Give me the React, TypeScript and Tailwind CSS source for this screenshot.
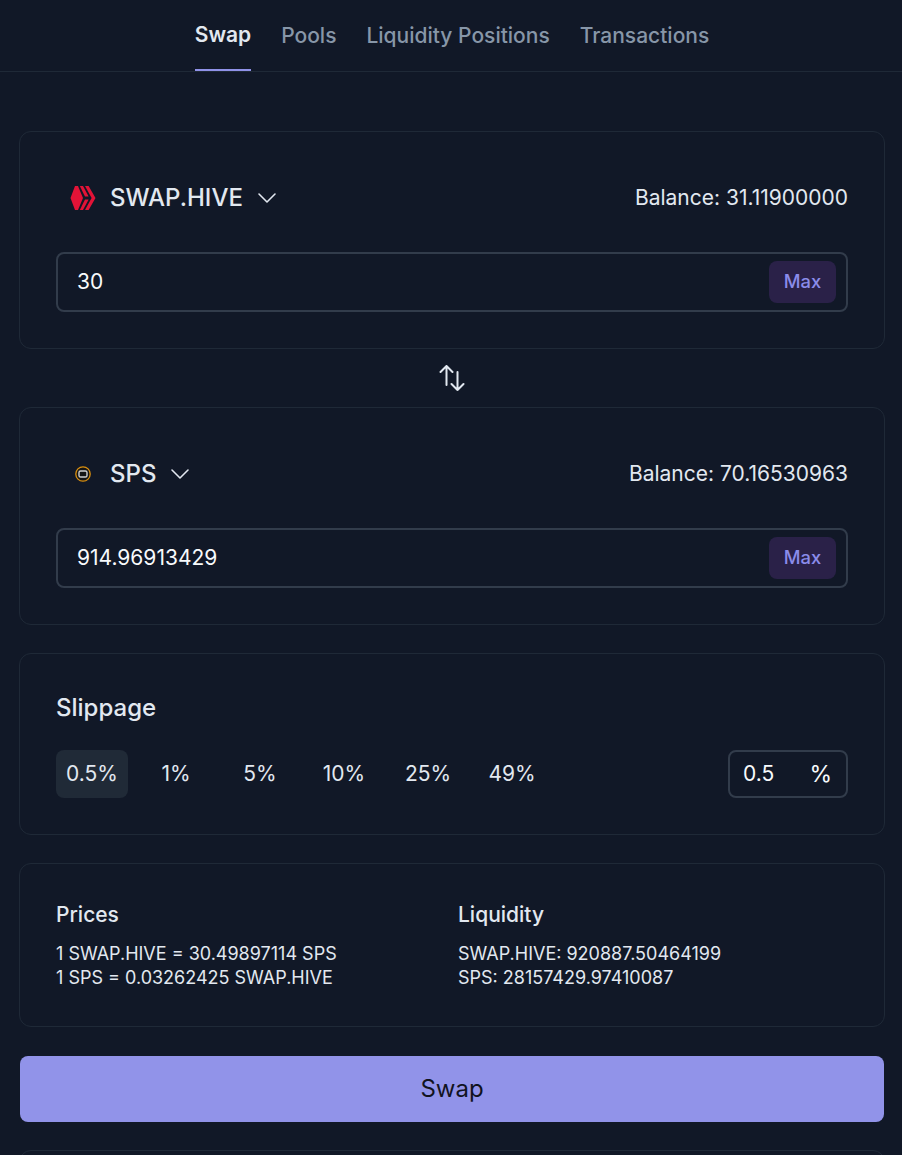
import React from "react";
import { ChevronDown } from "lucide-react";

function Hive() {
  return (
    <svg width="26" height="26" viewBox="0 0 26 26" fill="#e31337">
      <path d="M5 1 L8 1 L13 13 L8 25 L5 25 L0.5 13Z" />
      <path d="M9.8 1 L13 1 L18.6 11.6 L15 11.6Z" />
      <path d="M15 14.4 L18.6 14.4 L13 25 L9.8 25Z" />
      <path d="M15 1 L18.6 1 L25.5 13 L18.6 25 L15 25 L21.6 13Z" />
    </svg>
  );
}

function Sps() {
  return (
    <svg width="16" height="16" viewBox="0 0 16 16" fill="none">
      <circle cx="8" cy="8" r="7.2" stroke="#d98f10" strokeWidth="1.3" fill="#151515" />
      <rect x="4" y="5" width="8" height="6" rx="1.6" stroke="#d0d0d0" strokeWidth="1.4" />
    </svg>
  );
}

function SwapArrows() {
  return (
    <svg width="26" height="26" viewBox="0 0 26 26" fill="none" stroke="#e2e8f0" strokeWidth="2" strokeLinecap="round" strokeLinejoin="round">
      <path d="M7.5 20V1 M1.5 7 L7.5 1 L13.5 7" />
      <path d="M18.5 7V25 M12.5 19 L18.5 25 L24.5 19" />
    </svg>
  );
}

function TokenCard({ icon, name, balance, value }: { icon: React.ReactNode; name: string; balance: string; value: string }) {
  return (
    <div className="rounded-xl border border-[#1f2937] px-9 pt-[36px] pb-[36px] h-[218px]">
      <div className="flex items-center justify-between h-[60px]">
        <div className="flex items-center">
          <div className="w-[54px] flex justify-center">{icon}</div>
          <span className="text-[24px] font-medium text-[#e2e8f0]">{name}</span>
          <ChevronDown className="ml-[8px] w-8 h-8 text-[#e2e8f0]" strokeWidth={1.2} />
        </div>
        <span className="text-[21px] text-[#e2e8f0]">Balance: {balance}</span>
      </div>
      <div className="mt-[24px] h-[60px] rounded-lg border-2 border-[#323c4b] flex items-center justify-between pl-[19px] pr-[10px]">
        <span className="text-[21px] text-[#f8fafc]">{value}</span>
        <button className="h-[42px] w-[67px] rounded-lg bg-[#2a2148] text-[#8a8cea] text-[18.4px] font-medium">Max</button>
      </div>
    </div>
  );
}

export default function App() {
  return (
    <div className="w-[902px] h-[1155px] overflow-hidden bg-[#111827]" style={{ fontFamily: "Inter, sans-serif" }}>
      <div className="h-[72px] border-b border-[#1f2937] flex justify-center gap-[30px] pl-[2px]">
        <div className="h-[71px] flex items-center pt-[1px] text-[21px] font-semibold text-[#e2e8f0] border-b-[2px] border-[#9092e8]">Swap</div>
        <div className="h-[71px] flex items-center text-[21px] font-medium text-[#8796a8]">Pools</div>
        <div className="h-[71px] flex items-center text-[21px] font-medium text-[#8796a8]">Liquidity Positions</div>
        <div className="h-[71px] flex items-center text-[21px] font-medium text-[#8796a8]">Transactions</div>
      </div>
      <div className="pl-[19px] pr-[17px] pt-[59px]">
        <TokenCard icon={<Hive />} name="SWAP.HIVE" balance="31.11900000" value="30" />
        <div className="h-[58px] flex items-center justify-center">
          <SwapArrows />
        </div>
        <TokenCard icon={<Sps />} name="SPS" balance="70.16530963" value="914.96913429" />
        <div className="mt-[28px] rounded-xl border border-[#1f2937] px-9 pt-[37px] h-[182px]">
          <div className="text-[24px] font-medium text-[#e2e8f0] leading-[34px]">Slippage</div>
          <div className="mt-[25px] flex items-center justify-between">
            <div className="flex gap-3">
              {["0.5%", "1%", "5%", "10%", "25%", "49%"].map((s, i) => (
                <div key={s} className={`w-[72px] h-12 rounded-lg flex items-center justify-center text-[21px] text-[#e2e8f0] ${i === 0 ? "bg-[#202a37]" : ""}`}>{s}</div>
              ))}
            </div>
            <div className="w-[120px] h-12 rounded-lg border-2 border-[#323c4b] flex items-center justify-between pl-[13px] pr-[14px] text-[21px] text-[#f8fafc]">
              <span>0.5</span><span className="text-[23px]">%</span>
            </div>
          </div>
        </div>
        <div className="mt-[28px] rounded-xl border border-[#1f2937] px-9 pt-[36px] h-[164px] grid grid-cols-2 gap-3">
          <div>
            <div className="text-[21px] font-medium text-[#e2e8f0] leading-[30px]">Prices</div>
            <div className="mt-[12px] text-[18px] leading-6 text-[#e2e8f0]">1 SWAP.HIVE = 30.49897114 SPS</div>
            <div className="text-[18px] leading-6 text-[#e2e8f0]">1 SPS = 0.03262425 SWAP.HIVE</div>
          </div>
          <div>
            <div className="text-[21px] font-medium text-[#e2e8f0] leading-[30px]">Liquidity</div>
            <div className="mt-[12px] text-[18px] leading-6 text-[#e2e8f0]">SWAP.HIVE: 920887.50464199</div>
            <div className="text-[18px] leading-6 text-[#e2e8f0]">SPS: 28157429.97410087</div>
          </div>
        </div>
        <button className="mt-[29px] mx-px w-[864px] h-[66px] rounded-lg bg-[#9193e9] text-[#11131f] text-[24px] block">Swap</button>
        <div className="mt-[28px] h-12 rounded-xl border border-[#1f2937]" />
      </div>
    </div>
  );
}
